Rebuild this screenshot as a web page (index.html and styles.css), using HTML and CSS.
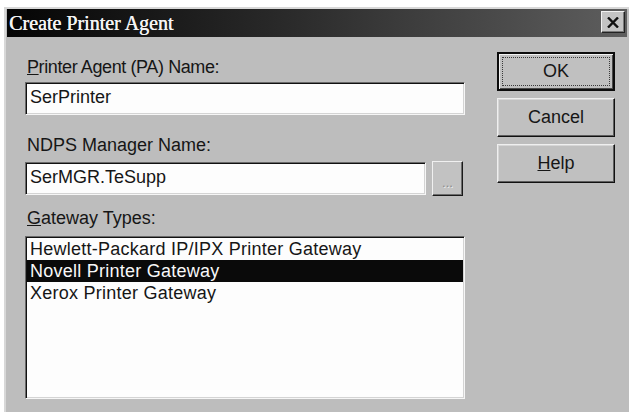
FILE: index.html
```html
<!DOCTYPE html>
<html lang="en">
  <head>
    <meta charset="UTF-8" />
    <title>Create Printer Agent</title>
    <link rel="stylesheet" href="styles.css">
  </head>
  <body>
    <!-- Dialog window -->
    <div class="dialog">
      <div class="titlebar">
        <span class="title">Create Printer Agent</span>
        <button class="close-btn" title="Close">
          <svg width="12" height="11" viewBox="0 0 12 11">
            <path d="M1 0.5 L11 10.5 M11 0.5 L1 10.5" stroke="#111" stroke-width="2.4" fill="none" />
          </svg>
        </button>
      </div>

      <div class="dialog-body">
        <!-- Form fields -->
        <div class="form">
          <label class="field-label first"><u>P</u>rinter Agent (PA) Name:</label>
          <div class="text-input wide">SerPrinter</div>

          <label class="field-label second">NDPS Manager Name:</label>
          <div class="input-row">
            <div class="text-input narrow">SerMGR.TeSupp</div>
            <button class="browse-btn">...</button>
          </div>

          <label class="field-label third"><u>G</u>ateway Types:</label>
          <ul class="list-box">
            <li>Hewlett-Packard IP/IPX Printer Gateway</li>
            <li class="selected">Novell Printer Gateway</li>
            <li>Xerox Printer Gateway</li>
          </ul>
        </div>

        <!-- Dialog buttons -->
        <div class="buttons">
          <button class="btn btn-default"><span class="focus">OK</span></button>
          <button class="btn">Cancel</button>
          <button class="btn"><u>H</u>elp</button>
        </div>
      </div>
    </div>
  </body>
</html>
```

FILE: styles.css
```css
/* Page */
body {
  margin: 0;
  background-color: #ffffff;
  font-family: "Liberation Sans", Arial, sans-serif;
  font-size: 18px;
  color: #161616;
  overflow: hidden;
}

/* Window frame */
.dialog {
  box-sizing: border-box;
  margin: 7px 0 0 4px;
  width: 625px;
  height: 405px;
  padding: 0 2px 0 1px;
  background-color: #bdbdbd;
  border-left: 2px solid #d8d8d8;
  border-top: 2px solid #d8d8d8;
}

/* Title bar */
.titlebar {
  height: 28px;
  display: flex;
  justify-content: space-between;
  align-items: flex-start;
  padding: 0 2px;
  background: linear-gradient(to right, #050505 0%, #2a2a2a 45%, #5e5e5e 100%);
}

.title {
  font-family: "Liberation Serif", "Times New Roman", serif;
  font-size: 20px;
  line-height: 28px;
  color: #f4f4f4;
  text-shadow: 0.4px 0 #f4f4f4;
}

.close-btn {
  box-sizing: border-box;
  width: 24px;
  height: 22px;
  margin-top: 2px;
  padding: 0;
  display: flex;
  align-items: center;
  justify-content: center;
  background-color: #c4c4c4;
  border: 1px solid;
  border-color: #f2f2f2 #222 #222 #f2f2f2;
  box-shadow: inset -1px -1px #7a7a7a;
}

/* Body layout */
.dialog-body {
  display: flex;
  padding: 15px 0 0 18px;
}

.form {
  width: 440px;
  padding-top: 5px;
}

.field-label {
  display: block;
  line-height: 21px;
  margin-left: 2px;
}

.field-label.first {
  margin-bottom: 4px;
  letter-spacing: -0.4px;
}

.field-label.second {
  margin-top: 20px;
  margin-bottom: 5px;
}

.field-label.third {
  margin-top: 12px;
  margin-bottom: 7px;
}

/* Sunken text fields */
.text-input {
  box-sizing: border-box;
  height: 33px;
  padding: 4px 4px;
  line-height: 21px;
  background-color: #fdfdfd;
  border: 1px solid;
  border-color: #6a6a6a #f6f6f6 #f6f6f6 #6a6a6a;
  box-shadow: inset 1px 1px #111, inset -1px -1px #d4d4d4;
}

.text-input.wide {
  width: 440px;
}

.text-input.narrow {
  width: 401px;
}

.input-row {
  display: flex;
  align-items: center;
  height: 35px;
}

.browse-btn {
  box-sizing: border-box;
  width: 31px;
  height: 35px;
  margin-left: 6px;
  padding: 8px 0 0;
  font-family: "Liberation Sans", Arial, sans-serif;
  font-size: 13px;
  color: #8a8a8a;
  text-shadow: 1px 1px #ededed;
  background-color: #c2c2c2;
  border: 1px solid;
  border-color: #f0f0f0 #1a1a1a #1a1a1a #f0f0f0;
  box-shadow: inset -1px -1px #6c6c6c;
}

/* List of gateway types */
.list-box {
  box-sizing: border-box;
  width: 440px;
  height: 163px;
  margin: 0;
  padding: 1px 0 0;
  list-style: none;
  background-color: #fdfdfd;
  border: 1px solid;
  border-color: #6a6a6a #f6f6f6 #f6f6f6 #6a6a6a;
  box-shadow: inset 1px 1px #111, inset -1px -1px #d4d4d4;
}

.list-box li {
  margin: 0 1px;
  padding-left: 3px;
  line-height: 22px;
  letter-spacing: 0.25px;
}

.list-box li.selected {
  background-color: #0a0a0a;
  color: #f8f8f8;
}

/* Dialog buttons */
.buttons {
  display: flex;
  flex-direction: column;
  gap: 7px;
  margin-left: 32px;
}

.btn {
  box-sizing: border-box;
  width: 118px;
  height: 39px;
  padding: 0;
  font-family: "Liberation Sans", Arial, sans-serif;
  font-size: 18px;
  color: #161616;
  background-color: #c0c0c0;
  border: 1px solid;
  border-color: #efefef #111 #111 #efefef;
  box-shadow: inset -1px -1px #5e5e5e, inset 1px 1px #d6d6d6;
}

.btn-default {
  border: 2px solid #0c0c0c;
  box-shadow: inset 1px 1px #f2f2f2, inset -1px -1px #4a4a4a;
  padding: 3px;
}

.btn-default .focus {
  display: flex;
  align-items: center;
  justify-content: center;
  height: 100%;
  border: 1px dotted #3a3a3a;
  box-sizing: border-box;
}
```
